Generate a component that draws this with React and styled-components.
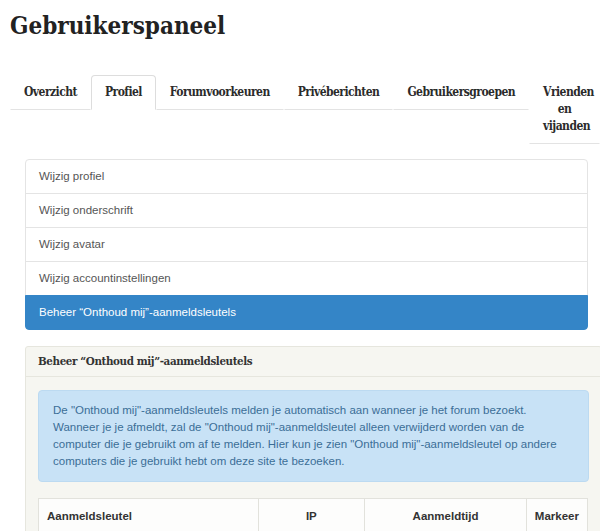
import React from "react";
import styled, { createGlobalStyle } from "styled-components";

const Global = createGlobalStyle`
  html, body { margin: 0; padding: 0; background: #fff; overflow: hidden; }
  body { font-family: "Liberation Sans", Arial, sans-serif; font-size: 11.5px; color: #555; }
`;

const slab = `"DejaVu Serif Condensed", "DejaVu Serif", serif`;

const Page = styled.div`
  width: 600px;
  padding: 0 0 0 10px;
  box-sizing: border-box;
`;

const Title = styled.h1`
  margin: 0;
  padding-top: 11px;
  font-family: ${slab};
  font-stretch: condensed;
  font-weight: bold;
  font-size: 24px;
  line-height: 30px;
  color: #222;
`;

const Tabs = styled.ul`
  display: flex;
  align-items: flex-start;
  list-style: none;
  margin: 34px 0 0 0;
  padding: 0;
`;

const Tab = styled.li`
  flex-shrink: ${(p) => (p.$wrap ? 1 : 0)};
  min-width: 0;
  padding: 8px 13px;
  font-family: ${slab};
  font-stretch: condensed;
  font-weight: bold;
  font-size: 12px;
  letter-spacing: -0.55px;
  line-height: 17px;
  color: #2b2b2b;
  text-align: center;
  white-space: ${(p) => (p.$wrap ? "normal" : "nowrap")};
  border: 1px solid ${(p) => (p.$active ? "#ddd" : "transparent")};
  border-bottom: 1px solid ${(p) => (p.$active ? "transparent" : "#e3e3e3")};
  border-radius: ${(p) => (p.$active ? "4px 4px 0 0" : "0")};
  background: #fff;
`;

const Content = styled.div`
  padding: 15px 0 0 15px;
`;

const ListGroup = styled.div`
  width: 563px;
  display: flex;
  flex-direction: column;
`;

const ListItem = styled.div`
  padding: 8px 13px;
  line-height: 17px;
  font-size: 11.5px;
  color: ${(p) => (p.$active ? "#fff" : "#555")};
  background: ${(p) => (p.$active ? "#3485c7" : "#fff")};
  border: 1px solid ${(p) => (p.$active ? "#3485c7" : "#e4e4e4")};
  margin-bottom: -1px;
  &:first-child { border-radius: 4px 4px 0 0; }
  &:last-child { border-radius: 0 0 4px 4px; margin-bottom: 0; }
`;

const Panel = styled.div`
  margin-top: 16px;
  width: 577px;
  box-sizing: border-box;
  background: #f6f6f1;
  border: 1px solid #e6e6de;
  border-radius: 3px;
`;

const PanelHeading = styled.div`
  padding: 6px 12px;
  line-height: 17px;
  font-family: ${slab};
  font-stretch: condensed;
  font-weight: bold;
  font-size: 11.5px;
  letter-spacing: -0.4px;
  color: #333;
  border-bottom: 1px solid #e6e6de;
`;

const PanelBody = styled.div`
  padding: 13px 12px;
`;

const Alert = styled.div`
  padding: 11px 14px;
  background: #c8e2f6;
  border: 1px solid #bcdaf1;
  border-radius: 4px;
  color: #3b6e96;
  font-size: 11.5px;
  line-height: 17px;
`;

const Table = styled.table`
  margin-top: 16px;
  width: 550px;
  border-collapse: collapse;
  background: #fdfdfc;
`;

const Th = styled.th`
  height: 34px;
  padding: 0 8px;
  border: 1px solid #e2e2dc;
  font-size: 11.5px;
  font-weight: bold;
  color: #333;
  text-align: ${(p) => p.$align || "center"};
  width: ${(p) => p.$w}px;
  box-sizing: border-box;
`;

const tabs = ["Overzicht", "Profiel", "Forumvoorkeuren", "Privéberichten", "Gebruikersgroepen", "Vrienden en vijanden"];
const items = ["Wijzig profiel", "Wijzig onderschrift", "Wijzig avatar", "Wijzig accountinstellingen", "Beheer \u201cOnthoud mij\u201d-aanmeldsleutels"];

export default function App() {
  return (
    <Page>
      <Global />
      <Title>Gebruikerspaneel</Title>
      <Tabs>
        {tabs.map((t, i) => (
          <Tab key={t} $active={i === 1} $wrap={i === 5}>{t}</Tab>
        ))}
      </Tabs>
      <Content>
        <ListGroup>
          {items.map((t, i) => (
            <ListItem key={t} $active={i === 4}>{t}</ListItem>
          ))}
        </ListGroup>
        <Panel>
          <PanelHeading>Beheer {"\u201c"}Onthoud mij{"\u201d"}-aanmeldsleutels</PanelHeading>
          <PanelBody>
            <Alert>
              De "Onthoud mij"-aanmeldsleutels melden je automatisch aan wanneer je het forum bezoekt.<br />
              Wanneer je je afmeldt, zal de "Onthoud mij"-aanmeldsleutel alleen verwijderd worden van de<br />
              computer die je gebruikt om af te melden. Hier kun je zien "Onthoud mij"-aanmeldsleutel op andere<br />
              computers die je gebruikt hebt om deze site te bezoeken.
            </Alert>
            <Table>
              <thead>
                <tr>
                  <Th $w={220} $align="left">Aanmeldsleutel</Th>
                  <Th $w={107}>IP</Th>
                  <Th $w={162}>Aanmeldtijd</Th>
                  <Th $w={61}>Markeer</Th>
                </tr>
              </thead>
            </Table>
          </PanelBody>
        </Panel>
      </Content>
    </Page>
  );
}
